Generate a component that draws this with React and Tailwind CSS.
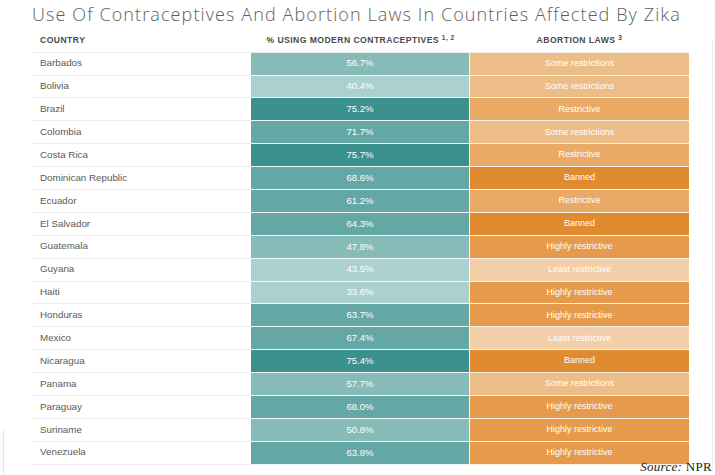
import React from "react";

const rows = [
  { country: "Barbados", pct: "56.7%", pctBg: "bg-[#86bbb8]", law: "Some restrictions", lawBg: "bg-[#edbd88]" },
  { country: "Bolivia", pct: "40.4%", pctBg: "bg-[#aad1cf]", law: "Some restrictions", lawBg: "bg-[#edbd88]" },
  { country: "Brazil", pct: "75.2%", pctBg: "bg-[#3a918d]", law: "Restrictive", lawBg: "bg-[#e9aa66]" },
  { country: "Colombia", pct: "71.7%", pctBg: "bg-[#63a8a4]", law: "Some restrictions", lawBg: "bg-[#edbd88]" },
  { country: "Costa Rica", pct: "75.7%", pctBg: "bg-[#3a918d]", law: "Restrictive", lawBg: "bg-[#e9aa66]" },
  { country: "Dominican Republic", pct: "68.6%", pctBg: "bg-[#63a8a4]", law: "Banned", lawBg: "bg-[#e08b2f]" },
  { country: "Ecuador", pct: "61.2%", pctBg: "bg-[#63a8a4]", law: "Restrictive", lawBg: "bg-[#e9aa66]" },
  { country: "El Salvador", pct: "64.3%", pctBg: "bg-[#63a8a4]", law: "Banned", lawBg: "bg-[#e08b2f]" },
  { country: "Guatemala", pct: "47.8%", pctBg: "bg-[#86bbb8]", law: "Highly restrictive", lawBg: "bg-[#e59b4b]" },
  { country: "Guyana", pct: "43.5%", pctBg: "bg-[#aad1cf]", law: "Least restrictive", lawBg: "bg-[#f2cfa8]" },
  { country: "Haiti", pct: "33.6%", pctBg: "bg-[#aad1cf]", law: "Highly restrictive", lawBg: "bg-[#e59b4b]" },
  { country: "Honduras", pct: "63.7%", pctBg: "bg-[#63a8a4]", law: "Highly restrictive", lawBg: "bg-[#e59b4b]" },
  { country: "Mexico", pct: "67.4%", pctBg: "bg-[#63a8a4]", law: "Least restrictive", lawBg: "bg-[#f2cfa8]" },
  { country: "Nicaragua", pct: "75.4%", pctBg: "bg-[#3a918d]", law: "Banned", lawBg: "bg-[#e08b2f]" },
  { country: "Panama", pct: "57.7%", pctBg: "bg-[#86bbb8]", law: "Some restrictions", lawBg: "bg-[#edbd88]" },
  { country: "Paraguay", pct: "68.0%", pctBg: "bg-[#63a8a4]", law: "Highly restrictive", lawBg: "bg-[#e59b4b]" },
  { country: "Suriname", pct: "50.8%", pctBg: "bg-[#86bbb8]", law: "Highly restrictive", lawBg: "bg-[#e59b4b]" },
  { country: "Venezuela", pct: "63.8%", pctBg: "bg-[#63a8a4]", law: "Highly restrictive", lawBg: "bg-[#e59b4b]" },
];

const App = () => {
  return (
    <div className="w-[715px] h-[475px] bg-white overflow-hidden relative font-['Liberation_Sans',Arial,sans-serif]">
      {/* faint scan edges */}
      <div className="absolute left-[3px] top-[430px] h-[45px] w-px bg-[#e4e4e4]" />
      <div className="absolute right-[2px] top-[40px] h-[430px] w-px bg-[#eeeeee]" />

      <div className="h-[28px] flex items-center pl-[32px]">
        <h1 className="font-['Open_Sans',sans-serif] font-light text-[18px] tracking-[1.1px] text-[#5e5e5e] leading-none whitespace-nowrap">
          Use Of Contraceptives And Abortion Laws In Countries Affected By Zika
        </h1>
      </div>

      <div className="ml-[31px] w-[658px]">
        <div className="flex h-[24.7px] items-center pt-[2px] border-b border-[#ececec] text-[8.6px] font-bold tracking-[0.45px] text-[#4a4a4a]">
          <div className="w-[220px] pl-[9px]">COUNTRY</div>
          <div className="w-[219px] text-center">
            % USING MODERN CONTRACEPTIVES <sup className="text-[6.5px]">1, 2</sup>
          </div>
          <div className="w-[219px] text-center">
            ABORTION LAWS <sup className="text-[6.5px]">3</sup>
          </div>
        </div>

        {rows.map((r) => (
          <div key={r.country} className="flex h-[22.9px]">
            <div className="w-[220px] pl-[9px] flex items-center border-b border-[#ececec] text-[9.8px] text-[#5a5a5a]">
              {r.country}
            </div>
            <div
              className={`w-[219px] flex items-center justify-center border-b border-r border-[#f4f8f8] text-[9.6px] text-white ${r.pctBg}`}
            >
              {r.pct}
            </div>
            <div
              className={`w-[219px] flex items-center justify-center border-b border-[#fbf3ea] text-[9px] text-white ${r.lawBg}`}
            >
              {r.law}
            </div>
          </div>
        ))}
      </div>

      <div className="flex justify-end pr-[3px] mt-[-5px]">
        <span className="font-['Liberation_Serif',serif] text-[13px] leading-none text-[#222] tracking-[0.3px]">
          <i>Source:</i> NPR
        </span>
      </div>
    </div>
  );
};

export default App;
